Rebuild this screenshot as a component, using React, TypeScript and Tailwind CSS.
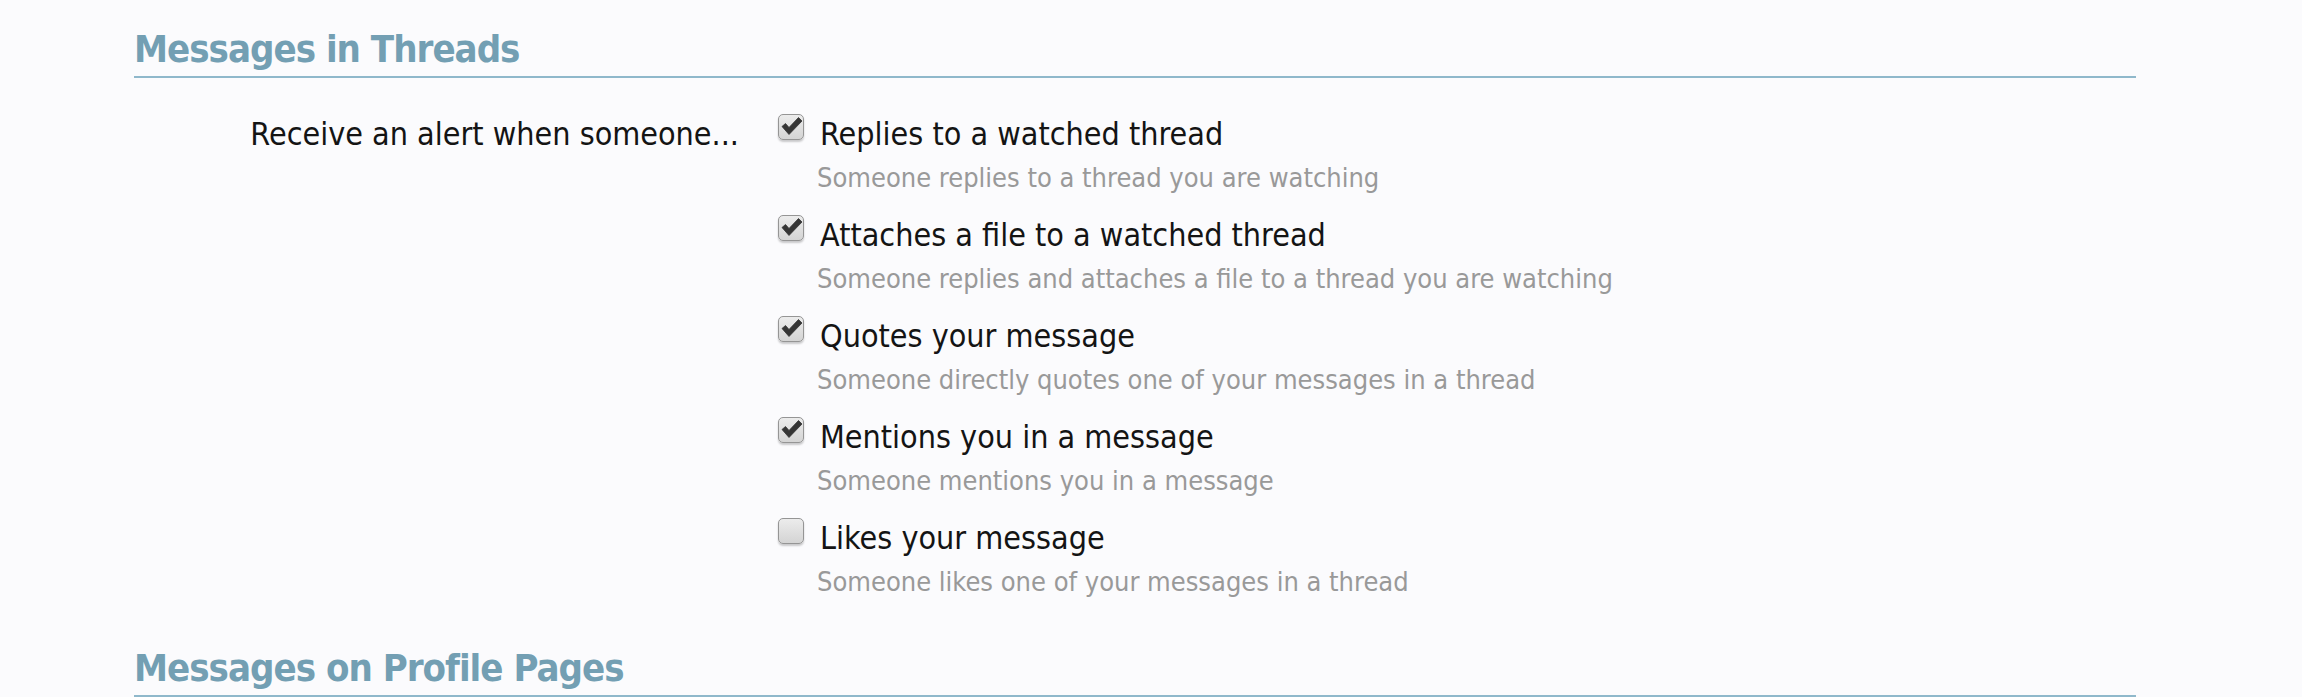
import React from "react";

const items = [
  { label: "Replies to a watched thread", desc: "Someone replies to a thread you are watching", checked: true },
  { label: "Attaches a file to a watched thread", desc: "Someone replies and attaches a file to a thread you are watching", checked: true },
  { label: "Quotes your message", desc: "Someone directly quotes one of your messages in a thread", checked: true },
  { label: "Mentions you in a message", desc: "Someone mentions you in a message", checked: true },
  { label: "Likes your message", desc: "Someone likes one of your messages in a thread", checked: false },
];

const font = { fontFamily: '"DejaVu Sans Condensed", "DejaVu Sans", sans-serif' };

function Box({ checked }: { checked: boolean }) {
  return (
    <div className="mt-[1px] h-[26px] w-[26px] shrink-0 rounded-[5px] border border-[#959595] bg-gradient-to-b from-[#ececec] to-[#d4d4d4] shadow-[0_2px_2px_rgba(0,0,0,0.2)]">
      {checked && (
        <svg width="24" height="24" viewBox="0 0 24 24" className="block">
          <path d="M3 11.5 L6.5 8.5 L10 12.5 L19.5 2.5 L23 6 L10 19.5 Z" fill="#353535" stroke="#353535" strokeWidth="0.8" strokeLinejoin="round" />
        </svg>
      )}
    </div>
  );
}

export default function App() {
  return (
    <div className="min-h-screen bg-[#fbfbfd] pl-[134px] pr-[166px]" style={font}>
      <h2 className="pt-[30px] pb-[8px] text-[38px] leading-[38px] tracking-[-1px] font-bold text-[#739fb3] border-b-2 border-[#8fb8cb]">
        Messages in Threads
      </h2>
      <div className="mt-[35px] flex">
        <div className="w-[605px] shrink-0 text-right text-[32px] leading-[42px] text-[#141414]">
          Receive an alert when someone...
        </div>
        <ul className="ml-[39px] flex flex-col">
          {items.map((it) => (
            <li key={it.label} className="flex h-[101px]">
              <Box checked={it.checked} />
              <div className="ml-[16px] flex flex-col">
                <span className="text-[32px] leading-[42px] text-[#141414]">{it.label}</span>
                <span className="-ml-[3px] mt-[7px] text-[27px] leading-[32px] text-[#999999]">{it.desc}</span>
              </div>
            </li>
          ))}
        </ul>
      </div>
      <h2 className="mt-[31px] pb-[8px] text-[38px] leading-[38px] tracking-[-1px] font-bold text-[#739fb3] border-b-2 border-[#8fb8cb]">
        Messages on Profile Pages
      </h2>
    </div>
  );
}
